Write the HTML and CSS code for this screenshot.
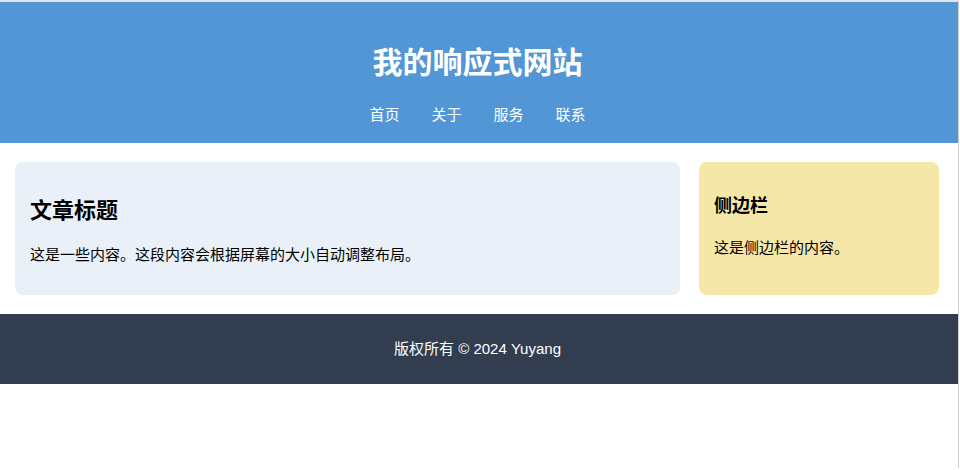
FILE: index.html
```html
<!DOCTYPE html>
<html lang="zh-CN">
<head>
<meta charset="utf-8">
<title>我的响应式网站</title>
<link rel="stylesheet" href="styles.css">
</head>
<body>
<div class="page">
  <header class="site-header">
    <h1 class="site-title">我的响应式网站</h1>
    <nav class="site-nav">
      <a href="#">首页</a>
      <a href="#">关于</a>
      <a href="#">服务</a>
      <a href="#">联系</a>
    </nav>
  </header>
  <main class="content">
    <article class="card card-main">
      <h2 class="card-title">文章标题</h2>
      <p class="card-text">这是一些内容。这段内容会根据屏幕的大小自动调整布局。</p>
    </article>
    <aside class="card card-side">
      <h3 class="side-title">侧边栏</h3>
      <p class="side-text">这是侧边栏的内容。</p>
    </aside>
  </main>
  <footer class="site-footer">版权所有 © 2024 Yuyang</footer>
</div>
</body>
</html>
```
FILE: styles.css
```css
html, body {
  margin: 0;
  padding: 0;
  background: #ffffff;
}
body {
  font-family: "Liberation Sans", "Noto Sans CJK SC", sans-serif;
  color: #000;
}
.page {
  border-top: 2px solid #e3e3e3;
  border-right: 1px solid #d2d2d2;
  margin-right: 1px;
  min-height: 468px;
  box-sizing: border-box;
}
.site-header {
  background: #5296d5;
  color: #fff;
  display: flex;
  flex-direction: column;
  align-items: center;
  padding: 41px 3px 18px 0;
}
.site-title {
  margin: 0;
  font-size: 30px;
  line-height: 40px;
  font-weight: bold;
}
.site-nav {
  display: flex;
  gap: 32px;
  margin-top: 22px;
}
.site-nav a {
  color: #fff;
  text-decoration: none;
  font-size: 15px;
  line-height: 20px;
}
.content {
  display: flex;
  gap: 19px;
  padding: 19px 19px 19px 15px;
}
.card {
  border-radius: 8px;
  padding: 15px;
}
.card-main {
  flex: 1;
  background: #e9f0f7;
}
.card-side {
  width: 210px;
  background: #f5e7a8;
}
.card-title {
  margin: 19px 0 0;
  font-size: 22px;
  line-height: 30px;
  font-weight: bold;
}
.card-text {
  margin: 18px 0 14px;
  font-size: 15px;
  line-height: 22px;
}
.side-title {
  margin: 17px 0 0;
  font-size: 18px;
  line-height: 24px;
  font-weight: bold;
}
.side-text {
  margin: 19px 0 0;
  font-size: 15px;
  line-height: 22px;
}
.site-footer {
  background: #323e4f;
  color: #fff;
  text-align: center;
  font-size: 15px;
  line-height: 22px;
  padding: 24px 3px 24px 0;
}
```
